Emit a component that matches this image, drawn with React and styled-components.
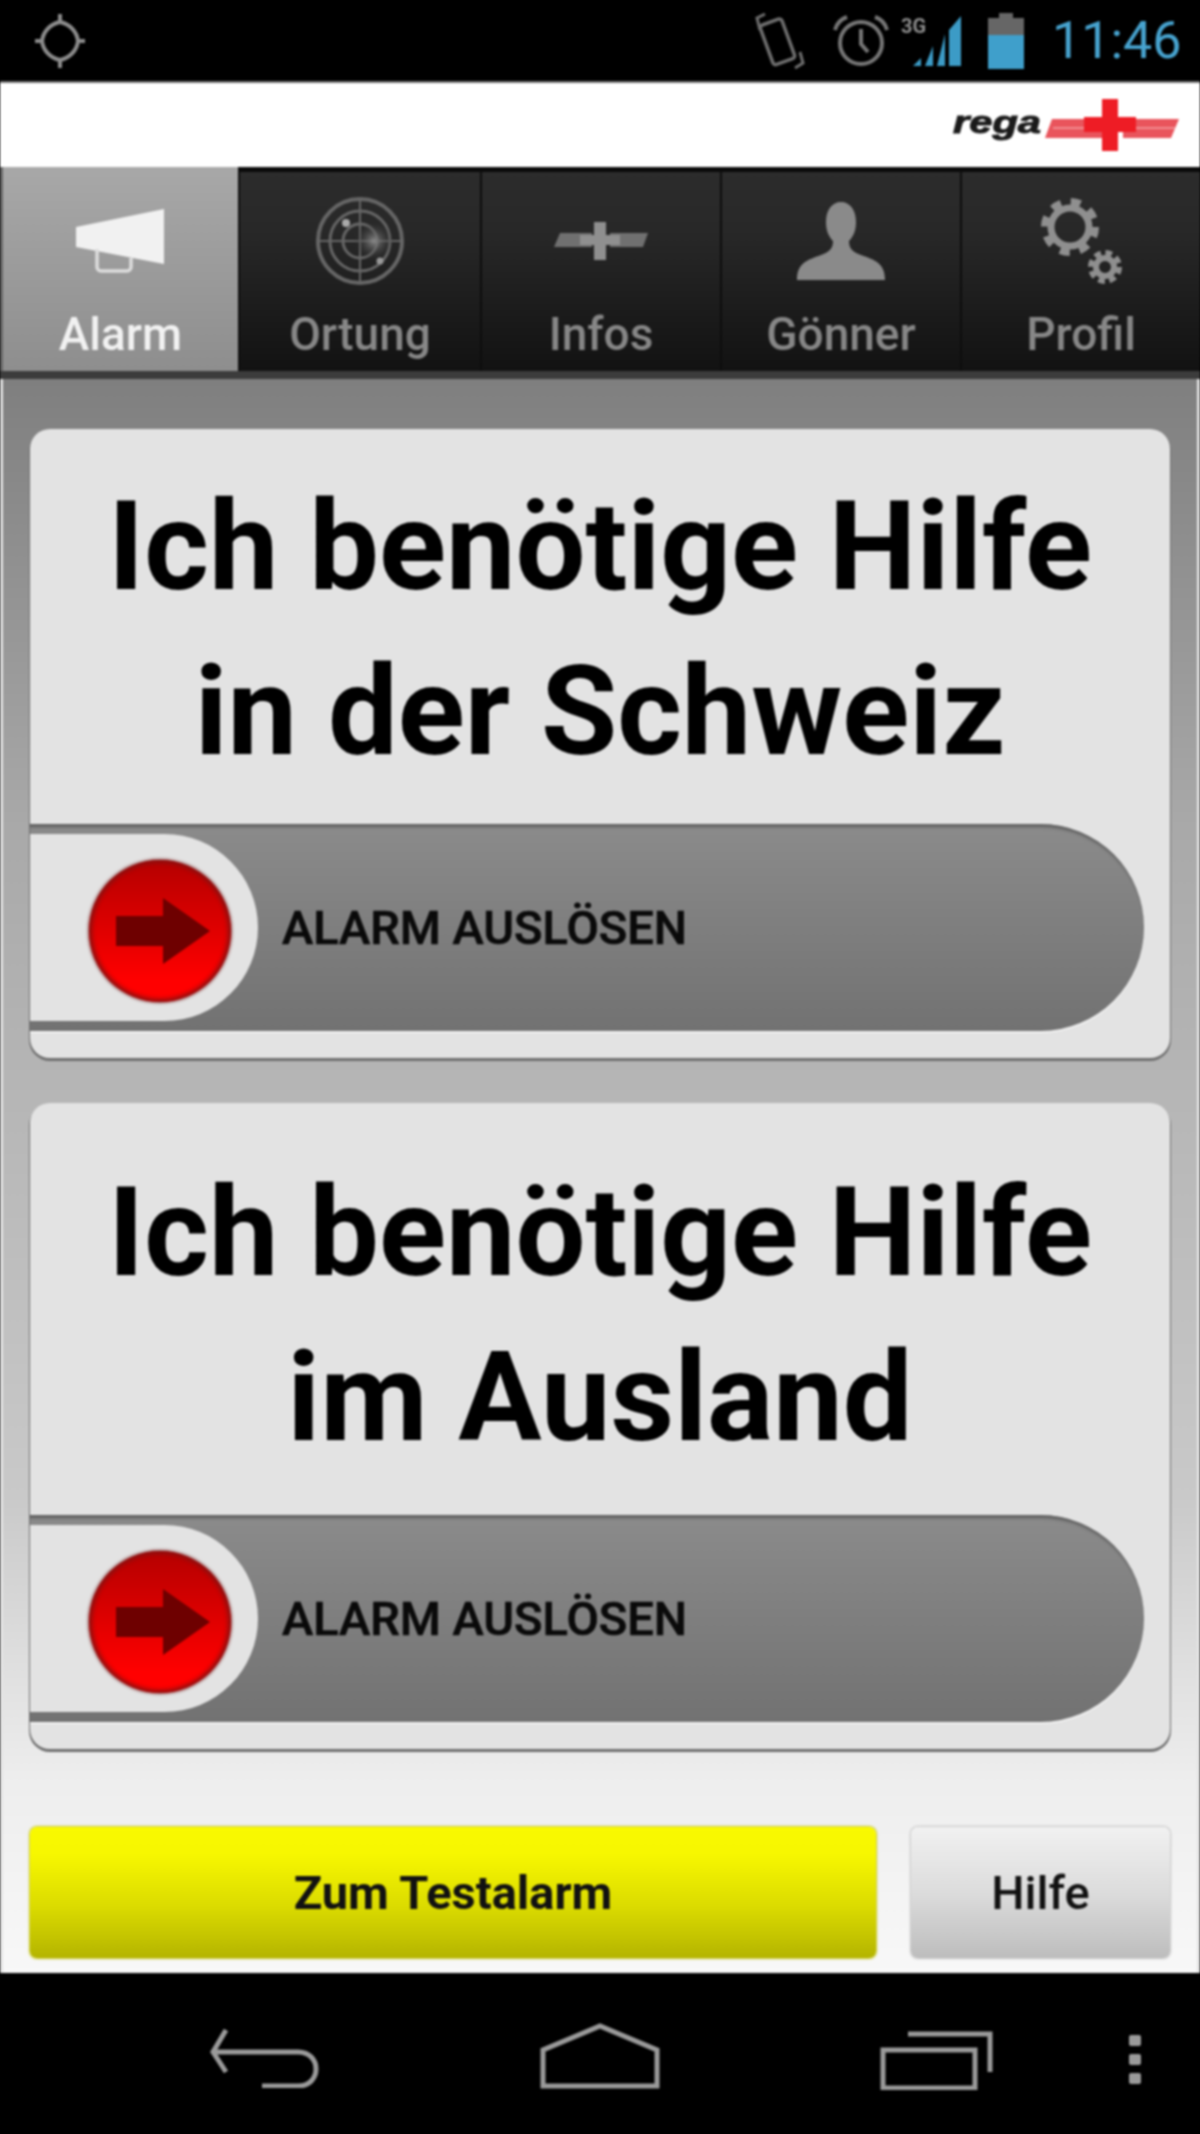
import React from "react";
import styled, { createGlobalStyle } from "styled-components";

const Global = createGlobalStyle`
  html, body { margin: 0; padding: 0; background: #000; }
  * { box-sizing: border-box; }
`;

const Page = styled.div`
  width: 1200px;
  height: 2134px;
  display: flex;
  flex-direction: column;
  overflow: hidden;
  font-family: Roboto, "Liberation Sans", sans-serif;
  filter: blur(1px);
`;

const StatusBar = styled.div`
  height: 83px;
  flex: none;
  background: #000;
  border-bottom: 2px solid #777;
  display: flex;
  align-items: center;
  padding: 0 22px 0 34px;
`;
const StatusRight = styled.div`
  margin-left: auto;
  display: flex;
  align-items: center;
`;
const StatusSvg = styled.svg`
  display: block;
  flex: none;
  margin-left: ${(p) => p.$ml || 0}px;
`;
const Clock = styled.span`
  width: 126px;
  margin-left: 28px;
  text-align: right;
  white-space: nowrap;
  font-size: 52px;
  line-height: 60px;
  font-weight: 400;
  color: #47a3cf;
`;

const Header = styled.div`
  height: 84px;
  flex: none;
  background: #fff;
  display: flex;
  align-items: center;
  justify-content: flex-end;
  padding-right: 20px;
`;

const Tabs = styled.div`
  height: 212px;
  flex: none;
  display: grid;
  grid-template-columns: 238px 242px 240px 240px 240px;
  border-bottom: 8px solid #3c3c3c;
  background: #111;
`;
const Tab = styled.div`
  display: flex;
  flex-direction: column;
  align-items: center;
  padding-top: ${(p) => (p.$active ? 6 : 1)}px;
  background: ${(p) =>
    p.$active
      ? "linear-gradient(#a8a8a8, #8e8e8e)"
      : "linear-gradient(#2c2c2c 0, #282828 30%, #121212 100%)"};
  border-top: ${(p) => (p.$active ? "none" : "5px solid #0a0a0a")};
  border-left: ${(p) => (p.$first ? "3px solid #666" : p.$active ? "none" : "2px solid #0d0d0d")};
`;
const IconSlot = styled.div`
  height: 136px;
  width: 100%;
  flex: none;
  display: flex;
  align-items: center;
  justify-content: center;
`;
const TabLabel = styled.span`
  font-size: 46px;
  line-height: 50px;
  font-weight: 500;
  color: ${(p) => (p.$active ? "#f2f2f2" : "#878787")};
`;

const Body = styled.div`
  flex: 1;
  min-height: 0;
  display: flex;
  flex-direction: column;
  padding: 50px 30px 15px;
  background: linear-gradient(#7f7f7f 0, #a9a9a9 28%, #b6b6b6 45%, #c9c9c9 70%, #eeeeee 88%, #f8f8f8 100%);
  box-shadow: inset 3px 0 0 #e4e4e4, inset -3px 0 0 #e4e4e4;
`;
const Card = styled.div`
  height: ${(p) => p.$height}px;
  flex: none;
  display: flex;
  flex-direction: column;
  background: #e3e3e3;
  border-radius: 20px;
  overflow: hidden;
  box-shadow: 0 2px 0 1px #6f6f6f;
  margin-bottom: 45px;
`;
const Heading = styled.h2`
  margin: 0;
  padding-top: ${(p) => p.$top}px;
  text-align: center;
  white-space: nowrap;
  font-size: 124px;
  line-height: 165px;
  font-weight: 700;
  color: #000;
`;
const Track = styled.div`
  margin-top: auto;
  margin-bottom: 27px;
  margin-right: 26px;
  height: 207px;
  flex: none;
  display: flex;
  align-items: center;
  gap: 24px;
  border-radius: 0 104px 104px 0;
  background: linear-gradient(#8b8b8b, #727272);
  box-shadow: inset 0 5px 3px -2px #5f5f5f, 0 2px 0 #f2f2f2;
`;
const Thumb = styled.div`
  width: 228px;
  height: 187px;
  flex: none;
  display: flex;
  align-items: center;
  padding: 7px 0 0 59px;
  border-radius: 0 94px 94px 0;
  background: #e3e3e3;
`;
const Knob = styled.div`
  width: 142px;
  height: 142px;
  padding-left: 5px;
  border-radius: 50%;
  display: flex;
  align-items: center;
  justify-content: center;
  background: linear-gradient(#b50000, #ff0000 85%);
  box-shadow: 0 0 3px 1px #8a4040, inset 0 0 4px 3px #8c1010;
`;
const TrackLabel = styled.span`
  font-size: 47px;
  font-weight: 500;
  color: #0a0a0a;
  white-space: nowrap;
  -webkit-text-stroke: 0.7px #0a0a0a;
`;

const Actions = styled.div`
  margin-top: auto;
  display: flex;
  gap: 35px;
`;
const ActionButton = styled.div`
  height: 131px;
  display: flex;
  align-items: center;
  justify-content: center;
  border-radius: 7px;
  font-size: 47px;
  color: #111;
  flex: ${(p) => (p.$primary ? "none" : 1)};
  width: ${(p) => (p.$primary ? "846px" : "auto")};
  font-weight: ${(p) => (p.$primary ? 700 : 500)};
  background: ${(p) =>
    p.$primary
      ? "linear-gradient(#f9f900 0, #f7f700 20%, #dcdc00 60%, #b4b400 100%)"
      : "linear-gradient(#f1f1f1, #dcdcdc 50%, #bdbdbd)"};
  box-shadow: ${(p) => (p.$primary ? "0 0 2px 1px #c9c92a" : "0 0 2px 1px #c4c4c4")};
`;

const NavBar = styled.div`
  height: 161px;
  flex: none;
  background: #000;
  display: grid;
  grid-template-columns: 210px 111px 219px 120px 220px 113px 135px 1fr;
  padding-top: 50px;
  align-items: start;
`;
const NavCell = styled.div`
  grid-column: ${(p) => p.$col};
  margin-top: ${(p) => p.$top || 0}px;
`;

const Crosshair = () => (
  <StatusSvg width="52" height="56" viewBox="0 0 52 56" fill="none" stroke="#8c8c8c">
    <path d="M26 9C36 11 43 19 44 28 43 37 36 45 26 47 16 45 9 37 8 28 9 19 16 11 26 9z" strokeWidth="4" />
    <path d="M26 1v8M26 47v8M1 28h7M44 28h7" strokeWidth="4" />
  </StatusSvg>
);
const PhoneRotate = () => (
  <StatusSvg width="50" height="58" viewBox="0 0 50 58" fill="none" stroke="#6e6e6e" strokeWidth="3.5">
    <rect x="11" y="9" width="23" height="42" rx="3" transform="rotate(-20 22 30)" />
    <path d="M5 18L2 6l8 -4M45 40l3 11-8 5" strokeWidth="3" />
  </StatusSvg>
);
const AlarmClock = () => (
  <StatusSvg width="58" height="54" viewBox="0 0 58 54" fill="none" stroke="#767676" strokeWidth="4" $ml={27}>
    <circle cx="29" cy="29" r="21" />
    <path d="M29 15v15l7 8M3 16C5 8 9 5 15 3M55 16C53 8 49 5 43 3" />
  </StatusSvg>
);
const Signal = () => (
  <StatusSvg width="62" height="54" viewBox="0 0 62 54" $ml={11}>
    <text x="0" y="19" fontFamily="Roboto, sans-serif" fontSize="20" fontWeight="700" fill="#8c8c8c">3G</text>
    <path d="M12 52h8v-8zM24 52h8V32zM36 52h8V20zM48 52h12V2l-12 14z" fill="#3c9bc6" />
  </StatusSvg>
);
const Battery = () => (
  <StatusSvg width="36" height="56" viewBox="0 0 36 56" $ml={25}>
    <path d="M11 0h14v5h11v17H0V5h11z" fill="#666" />
    <path d="M0 22h36v34H0z" fill="#3f9fcb" />
  </StatusSvg>
);
const RegaLogo = () => (
  <svg width="227" height="52" viewBox="0 0 227 52" style={{ display: "block" }}>
    <text x="0" y="34" textLength="88" lengthAdjust="spacingAndGlyphs" fontFamily="'Liberation Sans', sans-serif" fontSize="32" fontWeight="700" fontStyle="italic" fill="#1a1a1a" stroke="#1a1a1a" strokeWidth="1">rega</text>
    <path d="M99 20h50v19H92zM170 20h56l-8 19h-48z" fill="#e9545c" />
    <path d="M100 29h49M170 29h52" stroke="#f4a0a4" strokeWidth="1.5" />
    <path d="M149 0h16v18h18v15h-18v19h-16V33h-18V18h18z" fill="#ee1c25" />
  </svg>
);
const Megaphone = () => (
  <svg width="90" height="64" viewBox="0 0 90 64">
    <path d="M0 18L88 0v55L0 38z" fill="#f1f1f1" />
    <path d="M21 40v18a4 4 0 004 4h26a4 4 0 004-4v-9" fill="none" stroke="#ddd" strokeWidth="3.5" />
  </svg>
);
const Radar = () => (
  <svg width="88" height="88" viewBox="0 0 88 88" fill="none" stroke="#666">
    <defs>
      <radialGradient id="sweep">
        <stop offset="0" stopColor="#8a8a8a" />
        <stop offset="1" stopColor="#2a2a2a" stopOpacity="0" />
      </radialGradient>
    </defs>
    <circle cx="44" cy="44" r="42" strokeWidth="4" />
    <circle cx="44" cy="44" r="30" strokeWidth="3" />
    <circle cx="44" cy="44" r="17" strokeWidth="3" />
    <path d="M44 2v84M2 44h84" strokeWidth="2" />
    <circle cx="58" cy="44" r="20" fill="url(#sweep)" stroke="none" />
    <circle cx="30" cy="26" r="4" fill="#aaa" stroke="none" />
    <circle cx="64" cy="64" r="3.5" fill="#999" stroke="none" />
  </svg>
);
const RegaMark = () => (
  <svg width="94" height="38" viewBox="0 0 94 38">
    <path d="M6 11h32v14H0zM56 11h38l-5 14H56z" fill="#707070" />
    <path d="M40 0h12v13h14v10H52v15H40V23H26V13h14z" fill="#8f8f8f" />
  </svg>
);
const Person = () => (
  <svg width="88" height="78" viewBox="0 0 88 78">
    <path d="M44 0c9 0 15 8 15 20 0 9-3 15-7 19 0 7 3 11 12 14 14 5 24 8 24 25H0c0-17 10-20 24-25 9-3 12-7 12-14-4-4-7-10-7-19C29 8 35 0 44 0z" fill="#8a8a8a" />
  </svg>
);
const Gears = () => (
  <svg width="86" height="88" viewBox="0 0 86 88" fill="none" stroke="#8f8f8f">
    <circle cx="32" cy="30" r="19" strokeWidth="7" />
    <circle cx="32" cy="30" r="25" strokeWidth="8" strokeDasharray="9.8 9.84" />
    <circle cx="67" cy="70" r="9" strokeWidth="6" />
    <circle cx="67" cy="70" r="14" strokeWidth="6" strokeDasharray="6.5 4.5" />
  </svg>
);
const ArrowRight = () => (
  <svg width="94" height="66" viewBox="0 0 94 66">
    <path d="M0 18h47V0l47 33-47 33V48H0z" fill="#6e0000" />
  </svg>
);
const BackIcon = () => (
  <svg width="111" height="60" viewBox="0 0 111 60" fill="none" stroke="#9a9a9a" strokeWidth="5">
    <path d="M16 2L3 24l13 20M3 24h85c24 0 24 34 0 34H52" />
  </svg>
);
const HomeIcon = () => (
  <svg width="120" height="66" viewBox="0 0 120 66" fill="none" stroke="#9a9a9a" strokeWidth="5">
    <path d="M3 63V27L60 3l57 24v36z" />
  </svg>
);
const RecentIcon = () => (
  <svg width="113" height="60" viewBox="0 0 113 60" fill="none" stroke="#9a9a9a" strokeWidth="5">
    <rect x="3" y="20" width="92" height="38" />
    <path d="M28 4h82v38" />
  </svg>
);
const MenuDots = () => (
  <svg width="14" height="50" viewBox="0 0 14 50" fill="#9a9a9a" style={{ display: "block" }}>
    <rect x="1" y="0" width="12" height="11" rx="2" />
    <rect x="1" y="19" width="12" height="11" rx="2" />
    <rect x="1" y="38" width="12" height="11" rx="2" />
  </svg>
);

const tabs = [
  { label: "Alarm", Icon: Megaphone, active: true },
  { label: "Ortung", Icon: Radar },
  { label: "Infos", Icon: RegaMark },
  { label: "Gönner", Icon: Person },
  { label: "Profil", Icon: Gears },
];

const HelpCard = ({ height, top, lines }) => (
  <Card $height={height}>
    <Heading $top={top}>
      {lines[0]}
      <br />
      {lines[1]}
    </Heading>
    <Track>
      <Thumb>
        <Knob>
          <ArrowRight />
        </Knob>
      </Thumb>
      <TrackLabel>ALARM AUSLÖSEN</TrackLabel>
    </Track>
  </Card>
);

export default function App() {
  return (
    <Page>
      <Global />
      <StatusBar>
        <Crosshair />
        <StatusRight>
          <PhoneRotate />
          <AlarmClock />
          <Signal />
          <Battery />
          <Clock>11:46</Clock>
        </StatusRight>
      </StatusBar>
      <Header>
        <RegaLogo />
      </Header>
      <Tabs>
        {tabs.map(({ label, Icon, active }, i) => (
          <Tab key={label} $active={active} $first={i === 0}>
            <IconSlot>
              <Icon />
            </IconSlot>
            <TabLabel $active={active}>{label}</TabLabel>
          </Tab>
        ))}
      </Tabs>
      <Body>
        <HelpCard height={629} top={35} lines={["Ich benötige Hilfe", "in der Schweiz"]} />
        <HelpCard height={646} top={47} lines={["Ich benötige Hilfe", "im Ausland"]} />
        <Actions>
          <ActionButton $primary>Zum Testalarm</ActionButton>
          <ActionButton>Hilfe</ActionButton>
        </Actions>
      </Body>
      <NavBar>
        <NavCell $col={2} $top={5}><BackIcon /></NavCell>
        <NavCell $col={4}><HomeIcon /></NavCell>
        <NavCell $col={6} $top={7}><RecentIcon /></NavCell>
        <NavCell $col={8} $top={12}><MenuDots /></NavCell>
      </NavBar>
    </Page>
  );
}
